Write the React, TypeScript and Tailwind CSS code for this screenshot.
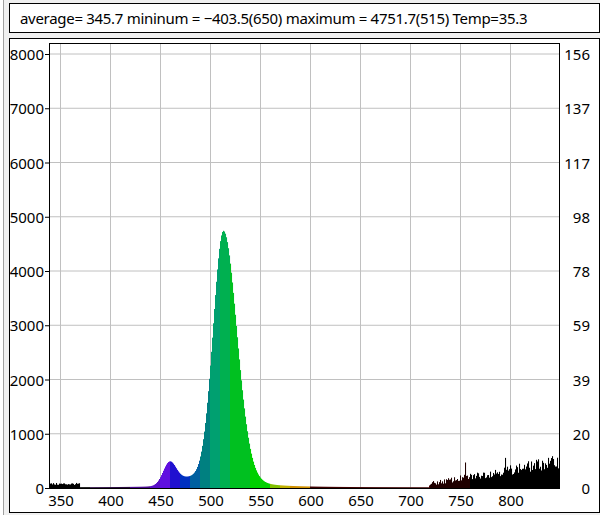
import React from "react";

function rnd(i: number) {
  const x = Math.sin(i * 12.9898 + 78.233) * 43758.5453;
  return x - Math.floor(x);
}
function inten(nm: number) {
  const s = nm < 513 ? 10.5 : 13.5;
  let v = 4250 * Math.exp(-((nm - 513) ** 2) / (2 * s * s));
  const w = nm < 513 ? 14 : 17;
  v += 480 / (1 + ((nm - 513) / w) ** 2);
  v += 400 * Math.exp(-((nm - 459) ** 2) / (2 * 6.5 * 6.5));
  v += 120 * Math.exp(-((nm - 475) ** 2) / (2 * 12 * 12));
  if (nm < 370) v += 50 + rnd(nm) * 40;
  else v += 10;
  if (nm > 718) {
    const t = (nm - 718) / 131;
    v += 60 + t * 420 + (rnd(nm) - 0.5) * 180 * (0.4 + t);
    if (nm === 755) v += 250;
    if (nm === 795) v += 200;
  }
  return Math.max(0, v);
}
function color(nm: number) {
  if (nm < 380) return "#000000";
  if (nm < 420) return "#2a0a40";
  if (nm < 440) return "#4a0a90";
  if (nm < 450) return "#5a10c8";
  if (nm < 460) return "#6010e0";
  if (nm < 470) return "#2010d0";
  if (nm < 480) return "#0030c0";
  if (nm < 490) return "#0060a0";
  if (nm < 500) return "#008080";
  if (nm < 510) return "#00a070";
  if (nm < 520) return "#00b050";
  if (nm < 540) return "#00c020";
  if (nm < 560) return "#00d000";
  if (nm < 570) return "#80c000";
  if (nm < 580) return "#c0b000";
  if (nm < 600) return "#d09000";
  if (nm < 720) return "#400000";
  if (nm < 760) return "#200000";
  return "#000000";
}

export default function App() {
  const X = (nm: number) => 50 + (nm - 350);
  const Y0 = 449;
  const k = 54.25 / 1000;
  const bars = [];
  for (let nm = 340; nm <= 848; nm++) {
    const h = inten(nm) * k;
    bars.push(<rect key={nm} x={X(nm)} y={Y0 - h} width={1.05} height={h} fill={color(nm)} />);
  }
  const ys = [0, 1, 2, 3, 4, 5, 6, 7, 8];
  const right = ["0", "20", "39", "59", "78", "98", "117", "137", "156"];
  const xs = [350, 400, 450, 500, 550, 600, 650, 700, 750, 800];
  return (
    <div className="w-[600px] h-[515px] bg-[#f0f0f0] font-['Liberation_Sans',Arial,sans-serif] border-l border-[#a0a0a0] ml-[3px]">
      <div className="pt-[3px] pl-[5px] pr-[3px] flex flex-col gap-[5px]">
        <div className="h-[30px] bg-white border border-black flex items-center pl-[10px] text-[15px] text-black tracking-[-0.3px]">
          average= 345.7 mininum = −403.5(650) maximum = 4751.7(515) Temp=35.3
        </div>
        <div className="h-[475px] bg-white border border-black">
          <svg width="586" height="473" className="text-[15px]">
            {ys.map((i) => (
              <line key={i} x1={39} x2={549} y1={Y0 - i * 54.25} y2={Y0 - i * 54.25} stroke="#c0c0c0" />
            ))}
            {xs.map((nm) => (
              <line key={nm} x1={X(nm) + 0.5} x2={X(nm) + 0.5} y1={4} y2={Y0} stroke="#c0c0c0" />
            ))}
            {bars}
            <rect x={39.5} y={4.5} width={510} height={445} fill="none" stroke="#000" />
            {ys.map((i) => (
              <g key={i}>
                <line x1={35} x2={39} y1={Y0 - i * 54.25 + 0.5} y2={Y0 - i * 54.25 + 0.5} stroke="#000" />
                <text x={34} y={Y0 - i * 54.25 + 6} textAnchor="end">{i * 1000}</text>
                <text x={580} y={Y0 - i * 54.25 + 6} textAnchor="end">{right[i]}</text>
              </g>
            ))}
            {xs.map((nm) => (
              <text key={nm} x={X(nm) + 1} y={467} textAnchor="middle">{nm}</text>
            ))}
          </svg>
        </div>
      </div>
    </div>
  );
}
